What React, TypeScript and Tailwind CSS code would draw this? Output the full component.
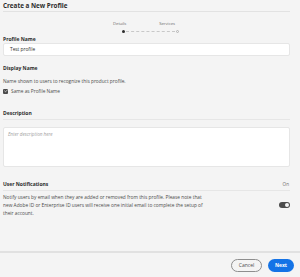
import { Check } from 'lucide-react';

const font = { fontFamily: '"Open Sans", "Liberation Sans", sans-serif' };

function Label({ children, className = '' }: { children: React.ReactNode; className?: string }) {
  return <div className={`text-[5px] font-bold leading-[8px] text-[#2c2c2c] ${className}`}>{children}</div>;
}

export default function App() {
  return (
    <div style={font} className="flex h-[277px] w-[300px] flex-col overflow-hidden bg-[#f4f4f4] text-[#4b4b4b]">
      <div className="flex-1 pl-[3px] pr-[10px]">
        <div className="h-[12px] border-b border-[#e2e2e2] text-[6.3px] font-bold leading-[11px] text-[#2c2c2c]">
          Create a New Profile
        </div>

        {/* stepper */}
        <div className="ml-[110px] mt-[9px] w-[66px]">
          <div className="flex justify-between text-[4.2px] leading-[6px] text-[#6e6e6e]">
            <span>Details</span>
            <span className="mr-[4px]">Services</span>
          </div>
          <div className="mt-[2px] flex h-[4px] items-center pl-[9px]">
            <span className="h-[3px] w-[3px] rounded-full bg-[#2c2c2c]" />
            <span className="mx-[1px] flex-1 border-t border-dashed border-[#c8c8c8]" />
            <span className="h-[3px] w-[3px] rounded-full border-[0.5px] border-[#b3b3b3]" />
          </div>
        </div>

        <Label className="mt-[2px]">Profile Name</Label>
        <div className="flex h-[13px] items-center rounded-[2px] border border-[#e6e6e6] bg-white pl-[6px] text-[4.8px] text-[#2c2c2c]">
          Test profile
        </div>

        <Label className="mt-[8px]">Display Name</Label>
        <div className="mt-[5px] text-[4.8px] leading-[8px]">Name shown to users to recognize this product profile.</div>
        <div className="mt-[2px] flex items-center gap-[3px] text-[4.8px] leading-[8px]">
          <span className="flex h-[5px] w-[5px] items-center justify-center rounded-[1px] bg-[#4b4b4b]">
            <Check size={4} strokeWidth={4} color="white" />
          </span>
          Same as Profile Name
        </div>

        <Label className="mt-[14px] border-b border-[#e6e6e6] pb-[2px]">Description</Label>
        <div className="mt-[7px] h-[40px] rounded-[2px] border border-[#e6e6e6] bg-white pl-[4px] pt-[3px] text-[4.6px] italic leading-[6px] text-[#a0a0a0]">
          Enter description here
        </div>

        <div className="mt-[13px] flex items-center justify-between border-b border-[#e6e6e6] pb-[2px]">
          <Label>User Notifications</Label>
          <span className="pr-[1px] text-[4.6px] leading-[8px] text-[#6e6e6e]">On</span>
        </div>
        <div className="mt-[2px] flex items-center justify-between">
          <p className="w-[209px] text-[4.8px] leading-[8px]">
            Notify users by email when they are added or removed from this profile. Please note that new Adobe ID or
            Enterprise ID users will receive one initial email to complete the setup of their account.
          </p>
          <span className="flex h-[6px] w-[11px] items-center justify-end rounded-full bg-[#4b4b4b] pr-[1px]">
            <span className="h-[4px] w-[4px] rounded-full bg-[#f4f4f4]" />
          </span>
        </div>
      </div>

      <div className="flex h-[26px] items-start justify-end gap-[6px] border-t-2 border-[#e1e1e1] pr-[6px] pt-[6px]">
        <button className="h-[13px] w-[31px] rounded-full border-[1.5px] border-[#8e8e8e] text-[5px] leading-none text-[#4b4b4b]">
          Cancel
        </button>
        <button className="h-[13px] w-[26px] rounded-full bg-[#1473e6] text-[5px] font-bold leading-none text-white">
          Next
        </button>
      </div>
    </div>
  );
}
